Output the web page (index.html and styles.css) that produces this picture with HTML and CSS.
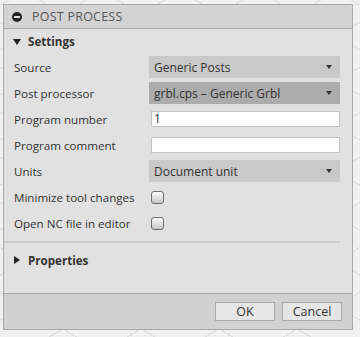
FILE: index.html
```html
<!DOCTYPE html>
<html lang="en">
<head>
    <meta charset="UTF-8">
    <title>Post Process</title>
    <link rel="stylesheet" href="styles.css">
</head>
<body>
    <div class="dialog">
        <!-- title bar -->
        <div class="titlebar">
            <span class="title-icon"></span>
            <span class="title-text">POST PROCESS</span>
        </div>

        <div class="dialog-body">
            <div class="section-head">
                <span class="tri tri-down"></span>
                <span>Settings</span>
            </div>

            <div class="form">
                <div class="row">
                    <label>Source</label>
                    <div class="select">Generic Posts<span class="arrow"></span></div>
                </div>
                <div class="row">
                    <label>Post processor</label>
                    <div class="select select-active">grbl.cps – Generic Grbl<span class="arrow"></span></div>
                </div>
                <div class="row">
                    <label>Program number</label>
                    <div class="input">1</div>
                </div>
                <div class="row">
                    <label>Program comment</label>
                    <div class="input"></div>
                </div>
                <div class="row">
                    <label>Units</label>
                    <div class="select">Document unit<span class="arrow"></span></div>
                </div>
                <div class="row">
                    <label>Minimize tool changes</label>
                    <div class="check"></div>
                </div>
                <div class="row">
                    <label>Open NC file in editor</label>
                    <div class="check"></div>
                </div>
            </div>

            <div class="separator"></div>

            <div class="section-head section-closed">
                <span class="tri tri-right"></span>
                <span>Properties</span>
            </div>
        </div>

        <!-- footer -->
        <div class="footer">
            <button class="btn">OK</button>
            <button class="btn">Cancel</button>
        </div>
    </div>
</body>
</html>
```

FILE: styles.css
```css
:root {
    --text: #333;
    --panel: #e1e1e1;
    --bar: #d3d3d3;
    --edge: #a9a9a9;
}

body {
    margin: 0;
    font-family: 'Open Sans', 'DejaVu Sans', sans-serif;
    font-size: 11.6px;
    color: var(--text);
    background-color: #f1f1f1;
    background-image:
        repeating-linear-gradient(30deg, transparent 0 38px, #dcdcdc 38px 39px),
        repeating-linear-gradient(-30deg, transparent 0 38px, #dcdcdc 38px 39px);
    height: 337px;
    overflow: hidden;
}

.dialog {
    width: 348px;
    height: 324px;
    margin: 4px 0 0 3px;
    border: 1px solid var(--edge);
    background: var(--panel);
    display: flex;
    flex-direction: column;
}

/* title bar */
.titlebar {
    height: 23px;
    background: var(--bar);
    border-bottom: 1px solid var(--edge);
    display: flex;
    align-items: center;
    padding-left: 8px;
    gap: 10px;
}

.title-icon {
    width: 10px;
    height: 10px;
    border-radius: 50%;
    background: #222;
    position: relative;
}

.title-icon::after {
    content: "";
    position: absolute;
    left: 2px;
    top: 4px;
    width: 6px;
    height: 2px;
    background: #ddd;
}

.title-text {
    color: #555;
    font-size: 12.4px;
    letter-spacing: 0.3px;
}

.dialog-body {
    flex: 1;
}

.section-head {
    height: 25px;
    display: flex;
    align-items: center;
    gap: 7px;
    padding-left: 9px;
    font-weight: 700;
    color: #333;
}

.section-closed {
    height: 34px;
}

.tri {
    width: 0;
    height: 0;
    border-style: solid;
}

.tri-down {
    border-width: 6px 4px 0 4px;
    border-color: #222 transparent transparent transparent;
}

.tri-right {
    border-width: 4px 0 4px 6px;
    border-color: transparent transparent transparent #222;
    margin-left: 1px;
    margin-right: 1px;
}

/* settings form */
.form {
    padding: 0 12px 0 10px;
}

.row {
    height: 26px;
    display: grid;
    grid-template-columns: 135px 1fr;
    align-items: center;
}

.select {
    height: 22px;
    background: #c9c9c9;
    display: flex;
    align-items: center;
    padding: 0 8px 0 5px;
    justify-content: space-between;
    font-size: 12px;
}

.select-active {
    background: #acacac;
}

.arrow {
    width: 0;
    height: 0;
    border-style: solid;
    border-width: 4px 3.5px 0 3.5px;
    border-color: #333 transparent transparent transparent;
}

.input {
    height: 14px;
    margin-left: 2px;
    background: #fff;
    border: 1px solid #c4c4c4;
    padding-left: 2px;
    line-height: 14px;
    font-size: 12px;
}

.check {
    width: 11px;
    height: 11px;
    margin-left: 2px;
    border: 1px solid #6e6e6e;
    border-radius: 3px;
    background: linear-gradient(#fafafa, #c8c8c8);
}

.separator {
    height: 2px;
    background: #cbcbcb;
    margin: 5px 12px 0 0;
}

/* footer */
.footer {
    height: 35px;
    background: #d1d1d1;
    border-top: 1px solid var(--edge);
    display: flex;
    justify-content: flex-end;
    align-items: center;
    gap: 7px;
    padding-right: 10px;
}

.btn {
    width: 60px;
    height: 19px;
    padding: 0;
    border: 1px solid #a9a9a9;
    background: #e6e6e6;
    font-family: 'Open Sans', 'DejaVu Sans', sans-serif;
    font-size: 12.5px;
    color: #333;
}
```
